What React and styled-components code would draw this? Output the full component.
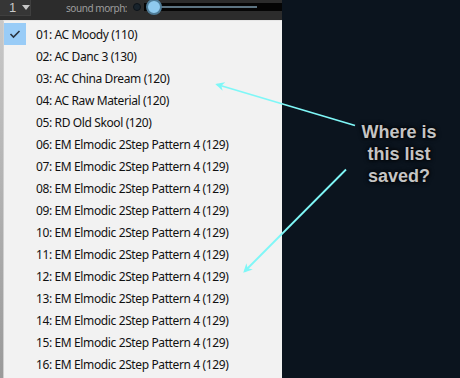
import React from "react";
import styled, { createGlobalStyle } from "styled-components";

const Global = createGlobalStyle`
  html, body { margin: 0; padding: 0; background: #0b141e; }
  #root { width: 460px; height: 378px; overflow: hidden; }
`;

const Screen = styled.div`
  position: relative;
  width: 460px;
  height: 378px;
  display: flex;
  background: #0b141e;
  overflow: hidden;
`;

const LeftColumn = styled.div`
  width: 282px;
  display: flex;
  flex-direction: column;
  background: #dcdcdc;
`;

const TopBar = styled.div`
  height: 20px;
  background: #2c2c2c;
  display: flex;
  align-items: flex-start;
`;

const PageButton = styled.div`
  width: 31px;
  height: 16px;
  background: #363636;
  border-right: 1px solid #3f3f3f;
  border-bottom: 1px solid #3f3f3f;
  display: flex;
  align-items: center;
  box-sizing: border-box;
  padding-left: 9px;
  gap: 6px;
  color: #c8c8c8;
  font: 13px "Liberation Sans", Arial, sans-serif;
`;

const Caret = styled.span`
  width: 0;
  height: 0;
  border-left: 4px solid transparent;
  border-right: 4px solid transparent;
  border-top: 5px solid #c8c8c8;
`;

const MorphLabel = styled.span`
  width: 61px;
  margin-left: 35px;
  margin-top: 2px;
  color: #9c9c9c;
  font: 10px "Noto Sans", "Open Sans", sans-serif;
  letter-spacing: -0.45px;
  line-height: 12px;
  white-space: nowrap;
  overflow: hidden;
`;

const Dot = styled.span`
  margin-left: 6px;
  margin-top: 3px;
  width: 8px;
  height: 8px;
  border-radius: 50%;
  background: #18232c;
  border: 1px solid #0c1218;
  box-sizing: border-box;
`;

const SliderBand = styled.div`
  position: relative;
  margin-left: 3px;
  margin-top: 3px;
  flex: 1;
  height: 8px;
  background: #050505;
`;

const SliderTrack = styled.div`
  position: absolute;
  left: 8px;
  top: 3px;
  width: 105px;
  height: 2px;
  background: #5d7482;
`;

const Knob = styled.div`
  position: absolute;
  left: 2px;
  top: -4px;
  width: 16px;
  height: 16px;
  border-radius: 50%;
  box-sizing: border-box;
  background: #8fcaee;
  border: 2px solid #4e7b96;
`;

const MenuWrap = styled.div`
  flex: 1;
  display: flex;
`;

const Gutter = styled.div`
  width: 3px;
  background: linear-gradient(#c8c8c8, #9a9a9a);
`;

const Menu = styled.div`
  flex: 1;
  background: #f2f2f2;
  border-left: 1px solid #cfcfcf;
  border-top: 1px solid #e6e6e6;
  padding-top: 2px;
  display: flex;
  flex-direction: column;
`;

const Row = styled.div`
  height: 22px;
  display: flex;
  align-items: center;
  font: 12px "Noto Sans", "Open Sans", sans-serif;
  letter-spacing: -0.38px;
  color: #111;
  white-space: nowrap;
`;

const CheckCell = styled.div`
  width: 22px;
  height: 22px;
  margin-right: 10px;
  display: flex;
  align-items: center;
  justify-content: center;
  background: ${(p) => (p.$checked ? "#99ccf7" : "transparent")};
`;

const ItemText = styled.span``;

const RightPanel = styled.div`
  flex: 1;
  background: #0b141e;
  padding-top: 121px;
  padding-left: 67px;
`;

const Question = styled.div`
  width: 100px;
  text-align: center;
  font: bold 18px "Liberation Sans", Arial, sans-serif;
  line-height: 22px;
  color: #c4c4c4;
  text-shadow: 0 0 3px #000, 0 0 5px #000;
`;

const ArrowLayer = styled.svg`
  position: absolute;
  left: 0;
  top: 0;
  pointer-events: none;
`;

const items = [
  "01: AC Moody (110)",
  "02: AC Danc 3 (130)",
  "03: AC China Dream (120)",
  "04: AC Raw Material (120)",
  "05: RD Old Skool (120)",
  ...Array.from({ length: 11 }, (_, i) =>
    `${String(i + 6).padStart(2, "0")}: EM Elmodic 2Step Pattern 4 (129)`
  ),
];

function Check() {
  return (
    <svg width="12" height="10" viewBox="0 0 12 10">
      <path d="M1.5 5 L4.5 8 L10.5 2" fill="none" stroke="#2a3440" strokeWidth="1.6" />
    </svg>
  );
}

export default function App() {
  return (
    <>
      <Global />
      <Screen>
        <LeftColumn>
          <TopBar>
            <PageButton>
              1<Caret />
            </PageButton>
            <MorphLabel>sound morph:</MorphLabel>
            <Dot />
            <SliderBand>
              <SliderTrack />
              <Knob />
            </SliderBand>
          </TopBar>
          <MenuWrap>
            <Gutter />
            <Menu>
              {items.map((t, i) => (
                <Row key={t + i}>
                  <CheckCell $checked={i === 0}>{i === 0 && <Check />}</CheckCell>
                  <ItemText>{t}</ItemText>
                </Row>
              ))}
            </Menu>
          </MenuWrap>
        </LeftColumn>
        <RightPanel>
          <Question>
            Where is
            <br />
            this list
            <br />
            saved?
          </Question>
        </RightPanel>
        <ArrowLayer width="460" height="378" viewBox="0 0 460 378">
          <defs>
            <marker id="ah" viewBox="0 0 10 10" refX="8" refY="5" markerWidth="5" markerHeight="5" orient="auto">
              <path d="M0 0 L10 5 L0 10 L3 5 Z" fill="#7ff7f7" />
            </marker>
          </defs>
          <line x1="355" y1="125.5" x2="217" y2="84.5" stroke="#7ff7f7" strokeWidth="1.8" markerEnd="url(#ah)" />
          <line x1="346" y1="169.5" x2="244.5" y2="271.5" stroke="#7ff7f7" strokeWidth="1.8" markerEnd="url(#ah)" />
        </ArrowLayer>
      </Screen>
    </>
  );
}
